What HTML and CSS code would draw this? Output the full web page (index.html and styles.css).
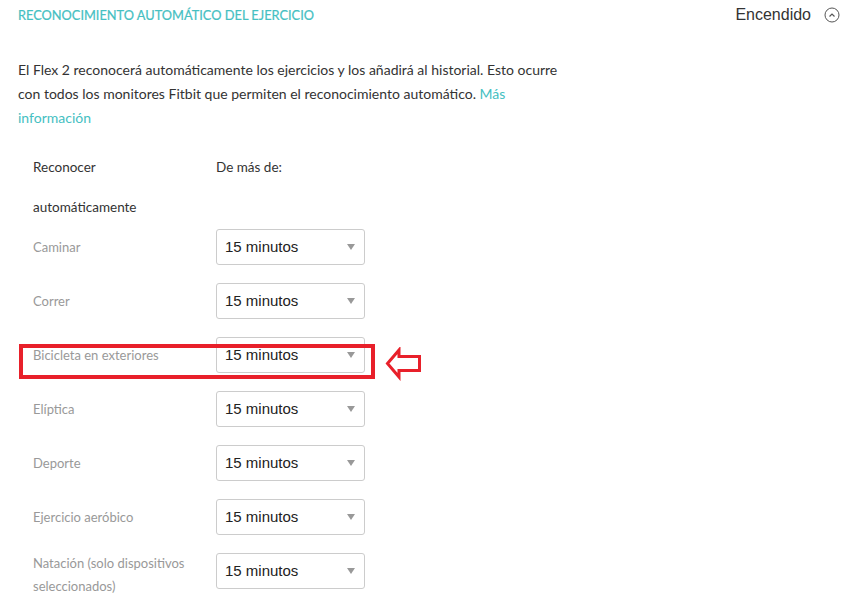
FILE: index.html
```html
<!DOCTYPE html>
<html lang="es">
<head>
    <meta charset="UTF-8">
    <meta name="viewport" content="width=device-width, initial-scale=1.0">
    <title>Reconocimiento automático del ejercicio</title>
    <link rel="stylesheet" href="styles.css">
</head>
<body>
    <section class="setting">
        <header class="setting-head">
            <h2>Reconocimiento automático del ejercicio</h2>
            <div class="state">
                <span>Encendido</span>
                <svg class="toggle" width="16" height="16" viewBox="0 0 16 16">
                    <circle cx="8" cy="8" r="7" fill="none" stroke="#555" stroke-width="1"/>
                    <path d="M5.5 9.5 L8 7 L10.5 9.5" fill="none" stroke="#555" stroke-width="1.2"/>
                </svg>
            </div>
        </header>

        <p class="intro">
            El Flex 2 reconocerá automáticamente los ejercicios y los añadirá al historial. Esto ocurre
            con todos los monitores Fitbit que permiten el reconocimiento automático. <a href="#">Más información</a>
        </p>

        <div class="rules">
            <div class="rule head">
                <span class="label">Reconocer automáticamente</span>
                <span class="col">De más de:</span>
            </div>
            <div class="rule">
                <span class="label">Caminar</span>
                <div class="select">15 minutos</div>
            </div>
            <div class="rule">
                <span class="label">Correr</span>
                <div class="select">15 minutos</div>
            </div>
            <div class="rule marked">
                <span class="label">Bicicleta en exteriores</span>
                <div class="select">15 minutos</div>
                <div class="highlight"></div>
                <svg class="pointer" width="38" height="34" viewBox="0 0 38 34">
                    <polygon points="2.5,16.5 14,3 14,9.5 34.5,9.5 34.5,23.5 14,23.5 14,30" fill="none" stroke="#e8202a" stroke-width="3"/>
                </svg>
            </div>
            <div class="rule">
                <span class="label">Elíptica</span>
                <div class="select">15 minutos</div>
            </div>
            <div class="rule">
                <span class="label">Deporte</span>
                <div class="select">15 minutos</div>
            </div>
            <div class="rule">
                <span class="label">Ejercicio aeróbico</span>
                <div class="select">15 minutos</div>
            </div>
            <div class="rule tall">
                <span class="label">Natación (solo dispositivos seleccionados)</span>
                <div class="select">15 minutos</div>
            </div>
        </div>
    </section>
</body>
</html>
```

FILE: styles.css
```css
body {
    margin: 0;
    padding: 0;
    font-family: Lato, "Open Sans", sans-serif;
    color: #333;
    background: #fff;
}

.setting {
    padding: 0 18px 30px 18px;
}

.setting-head {
    display: flex;
    justify-content: space-between;
    align-items: center;
    height: 29px;
}

.setting-head h2 {
    margin: 0;
    font-size: 12.8px;
    font-weight: 400;
    text-transform: uppercase;
    color: #45c0c2;
    -webkit-text-stroke: 0.2px #45c0c2;
}

.state {
    display: flex;
    align-items: center;
    gap: 13px;
    font-family: "Liberation Sans", Arial, sans-serif;
    font-size: 16px;
    color: #333;
}

.toggle {
    display: block;
}

.intro {
    margin: 29px 0 0 0;
    width: 560px;
    font-size: 14px;
    line-height: 24px;
}

.intro a {
    color: #45c0c2;
    text-decoration: none;
}

.rules {
    margin-top: 17px;
    padding-left: 15px;
    display: flex;
    flex-direction: column;
    gap: 18px;
}

.rule {
    position: relative;
    display: grid;
    grid-template-columns: 183px 149px;
    grid-template-rows: 36px;
    align-items: center;
}

.rule .label {
    font-size: 13px;
    line-height: 23px;
    color: #999;
    padding-right: 20px;
}

.rule.tall .label {
    padding-top: 7px;
}

.rule.head {
    grid-template-rows: auto;
    align-items: start;
    margin-bottom: -16px;
}

.rule.head .label,
.rule.head .col {
    font-size: 13.5px;
    line-height: 40px;
    color: #333;
}

.select {
    position: relative;
    box-sizing: border-box;
    height: 36px;
    padding: 0 8px;
    border: 1px solid #ccc;
    border-radius: 3px;
    font-family: "Liberation Sans", Arial, sans-serif;
    font-size: 15px;
    line-height: 34px;
    color: #222;
    background: #fff;
}

.select::after {
    content: "";
    position: absolute;
    right: 9px;
    top: 14px;
    border-left: 4px solid transparent;
    border-right: 4px solid transparent;
    border-top: 6px solid #999;
}

.highlight {
    position: absolute;
    left: -14px;
    top: 7px;
    width: 356px;
    height: 35px;
    box-sizing: border-box;
    border: 4px solid #e8202a;
}

.pointer {
    position: absolute;
    left: 352px;
    top: 10px;
}
```
